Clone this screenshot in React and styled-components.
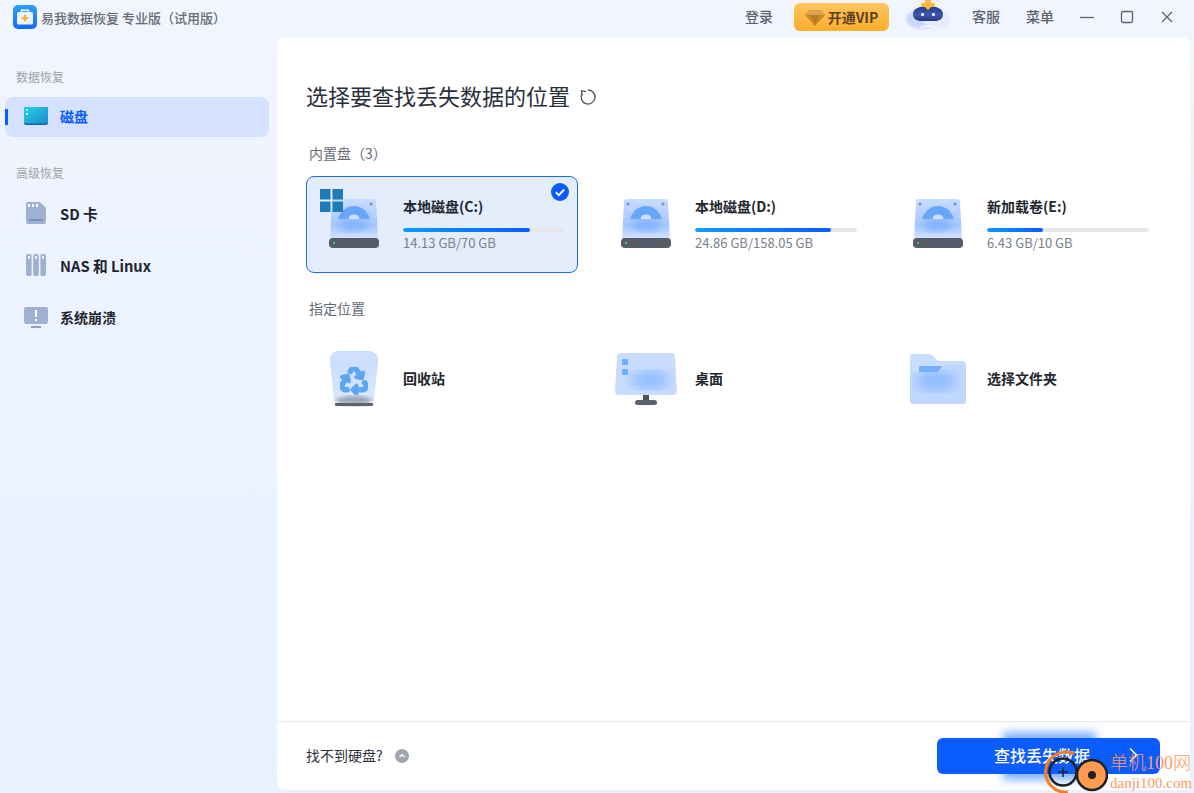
import React from "react";
import styled, { createGlobalStyle } from "styled-components";
import { FaRecycle } from "react-icons/fa";

const Global = createGlobalStyle`
  html, body { margin: 0; padding: 0; height: 100%; }
  body { font-family: "Noto Sans CJK SC", "Noto Sans", sans-serif; overflow: hidden; }
  #root { height: 100%; }
`;

const Page = styled.div`
  position: relative;
  width: 1194px;
  height: 793px;
  display: flex;
  flex-direction: column;
  overflow: hidden;
  background: linear-gradient(180deg, #f0f5ff 0%, #e9f1ff 100%);
`;

const TitleBar = styled.header`
  height: 37px;
  flex: none;
  box-sizing: border-box;
  padding: 0 0 3px 13px;
  display: flex;
  align-items: center;
`;
const AppTitle = styled.span`
  margin-left: 4px;
  font-size: 13px;
  font-weight: 500;
  color: #666b76;
  white-space: nowrap;
`;
const TitleActions = styled.div`
  margin-left: auto;
  display: flex;
  align-items: center;
`;
const TitleLink = styled.span`
  font-size: 14px;
  font-weight: 500;
  line-height: 18px;
  padding-bottom: 2px;
  color: #5c6270;
  margin-left: ${(p) => p.$ml}px;
`;
const VipButton = styled.div`
  margin-left: 21px;
  width: 95px;
  height: 28px;
  border-radius: 6px;
  background: linear-gradient(180deg, #ffc55c 0%, #ffad2b 100%);
  display: flex;
  align-items: center;
  justify-content: center;
  gap: 3px;
  font-size: 14px;
  font-weight: 700;
  color: #5a4320;
`;
const RobotSlot = styled.span`
  display: flex;
  margin: -4px 0 0 16px;
`;
const WinButton = styled.button`
  border: 0;
  background: none;
  padding: 0;
  width: 16px;
  height: 16px;
  display: flex;
  color: #5c6270;
  margin-left: ${(p) => p.$ml}px;
  margin-right: ${(p) => p.$mr || 0}px;
`;

const Body = styled.div`
  flex: 1;
  display: flex;
  min-height: 0;
`;
const Sidebar = styled.aside`
  width: 277px;
  flex: none;
  padding: 30px 8px 0 5px;
  box-sizing: border-box;
`;
const SideLabel = styled.div`
  height: 20px;
  line-height: 20px;
  margin: ${(p) => p.$m};
  padding-left: 11px;
  font-size: 12px;
  color: #a0a3ab;
`;
const SideItem = styled.div`
  position: relative;
  height: ${(p) => (p.$active ? 40 : 52)}px;
  box-sizing: border-box;
  padding: 0 0 2px 19px;
  border-radius: 8px;
  display: flex;
  align-items: center;
  background: ${(p) => (p.$active ? "#d4e2ff" : "transparent")};
  color: ${(p) => (p.$active ? "#0a5cff" : "#1f2430")};
  font-size: ${(p) => (p.$latin ? 14.7 : 14)}px;
  font-weight: 700;
`;
const ActiveMark = styled.i`
  position: absolute;
  left: 0;
  top: 12px;
  width: 3px;
  height: 16px;
  background: #0a5cff;
`;
const SideIcon = styled.span`
  width: 24px;
  height: 24px;
  display: flex;
  align-items: center;
  justify-content: center;
  margin-right: 12px;
`;

const Panel = styled.main`
  width: 913px;
  height: 753px;
  flex: none;
  background: #fff;
  border-radius: 8px;
  display: flex;
  flex-direction: column;
  box-sizing: border-box;
  padding-top: 44px;
`;
const Content = styled.div`
  padding-left: 29px;
`;
const HeadRow = styled.div`
  height: 30px;
  display: flex;
  align-items: flex-start;
  gap: 9px;
`;
const Heading = styled.h1`
  margin: 0;
  font-size: 22px;
  font-weight: 400;
  color: #2a2f3c;
  line-height: 28px;
`;
const RefreshIcon = styled.svg`
  align-self: center;
  margin-top: 2px;
`;
const SectionLabel = styled.div`
  height: 20px;
  line-height: 18px;
  margin: ${(p) => p.$mt}px 0 12px 3px;
  font-size: 14px;
  color: #666b76;
`;
const Grid = styled.div`
  display: grid;
  grid-template-columns: repeat(3, 272px);
  column-gap: 20px;
`;
const Card = styled.div`
  position: relative;
  height: 97px;
  box-sizing: border-box;
  display: grid;
  grid-template-columns: 97px 162px;
  align-items: center;
  border-radius: 8px;
  border: 1px solid ${(p) => (p.$selected ? "#1f6cf0" : "transparent")};
  background: ${(p) => (p.$selected ? "#e3edfb" : "transparent")};
`;
const IconCell = styled.div`
  display: flex;
  justify-content: center;
  align-items: center;
  margin-left: -3px;
  padding-bottom: 2px;
`;
const DriveInfo = styled.div`
  padding-bottom: 1px;
`;
const Name = styled.div`
  font-size: 14px;
  font-weight: 700;
  color: #22262f;
  line-height: 16px;
  margin-left: -1px;
`;
const PlaceName = styled(Name)`
  padding-bottom: 3px;
`;
const Track = styled.div`
  height: 4px;
  margin: 14px 1px 3px -1px;
  border-radius: 2px;
  background: #e6e7ea;
  overflow: hidden;
`;
const Fill = styled.div`
  height: 100%;
  width: ${(p) => p.$pct}%;
  border-radius: 2px;
  background: linear-gradient(90deg, #0f9bff 0%, #0a5cff 100%);
`;
const Size = styled.div`
  font-size: 13px;
  line-height: 16px;
  color: #7a7f8a;
  margin-left: -1px;
  white-space: nowrap;
`;
const Check = styled.svg`
  position: absolute;
  right: 8px;
  top: 6px;
`;
const WinBadge = styled.svg`
  position: absolute;
  left: 13px;
  top: 12px;
`;
const Footer = styled.footer`
  margin-top: auto;
  height: 69px;
  flex: none;
  box-sizing: border-box;
  border-top: 1px solid #e6e8ec;
  display: flex;
  align-items: center;
  padding: 0 30px 0 29px;
`;
const HelpText = styled.span`
  font-size: 14px;
  color: #2b2f38;
  padding-bottom: 2px;
`;
const HelpIcon = styled.svg`
  margin-left: 12px;
`;
const ScanWrap = styled.div`
  position: relative;
  z-index: 0;
  margin-left: auto;
`;
const ScanButton = styled.button`
  position: relative;
  width: 223px;
  height: 36px;
  border: 0;
  border-radius: 6px;
  background: #0a5cff;
  color: #fff;
  font-family: inherit;
  font-size: 16px;
  font-weight: 500;
  display: flex;
  align-items: center;
  padding: 0 0 3px 57px;
  gap: 38px;
  &::before {
    content: "";
    position: absolute;
    left: 66px;
    right: 64px;
    top: -6px;
    bottom: -6px;
    background: #7fb2ff;
    filter: blur(4px);
    z-index: -1;
  }
`;
const Watermark = styled.div`
  position: absolute;
  left: 1044px;
  top: 750px;
  width: 150px;
  height: 43px;
  display: flex;
`;
const WmText = styled.div`
  margin-left: 66px;
  margin-top: 1px;
  color: #ff9a60;
  font-family: "Liberation Serif", "Noto Sans CJK SC", serif;
  white-space: nowrap;
`;
const WmCn = styled.div`
  font-size: 18px;
  line-height: 24px;
  font-weight: 300;
`;
const WmEn = styled.div`
  font-size: 15px;
  line-height: 17px;
`;
const WmLogo = styled.svg`
  position: absolute;
  left: 0;
  top: 0;
`;

const Logo = () => (
  <svg width="24" height="24" viewBox="0 0 24 24">
    <defs>
      <linearGradient id="logoGrad" x1="0" y1="0" x2="0" y2="1">
        <stop offset="0" stopColor="#2ea2fb" />
        <stop offset="1" stopColor="#1369f5" />
      </linearGradient>
    </defs>
    <rect width="24" height="24" rx="5" fill="url(#logoGrad)" />
    <path d="M8.5 7V5.2h7V7" fill="none" stroke="#fff" strokeWidth="1.4" />
    <rect x="4" y="7" width="16" height="12.5" rx="1.5" fill="#eaf4ff" />
    <path d="M11 9.8h2v2.4h2.4v2H13v2.4h-2v-2.4H8.6v-2H11z" fill="#ffb020" />
  </svg>
);

const Diamond = () => (
  <svg width="20" height="17" viewBox="0 0 20 17">
    <path d="M4 1h12l4 5-10 11L0 6z" fill="#c9862a" />
    <path d="M4 1h12l4 5H0z" fill="#dca44a" />
    <path d="M6 6h8l-4 10z" fill="#b87a22" />
  </svg>
);

const Robot = () => (
  <svg width="46" height="30" viewBox="0 0 46 30">
    <defs>
      <filter id="robotBlur"><feGaussianBlur stdDeviation="1.2" /></filter>
      <linearGradient id="robotFace" x1="0" y1="0" x2="0" y2="1">
        <stop offset="0" stopColor="#243a86" />
        <stop offset="0.6" stopColor="#3e58b0" />
        <stop offset="1" stopColor="#22367c" />
      </linearGradient>
    </defs>
    <ellipse cx="17" cy="19" rx="16" ry="10" fill="#c9d8ff" filter="url(#robotBlur)" />
    <ellipse cx="32" cy="20" rx="13" ry="9" fill="#e6eaff" filter="url(#robotBlur)" />
    <path d="M8 14c0-5 6-8 15-8s15 3 15 8c0 5-4 7-8 7H16c-4 0-8-2-8-7z" fill="url(#robotFace)" />
    <path d="M20 0h6v3h4v4h-4l-3 3-3-3h-4V3h4z" fill="#f5b93c" />
    <rect x="16" y="13" width="3" height="3" rx="1" fill="#e6eeff" />
    <rect x="27" y="13" width="3" height="3" rx="1" fill="#e6eeff" />
    <path d="M15 28q8-4 16 0" fill="none" stroke="#fff" strokeWidth="1.5" opacity="0.8" />
  </svg>
);

const DiskSide = () => (
  <svg width="24" height="18" viewBox="0 0 24 18">
    <defs>
      <linearGradient id="sideDisk" x1="0" y1="0" x2="1" y2="1">
        <stop offset="0" stopColor="#2ad0e0" />
        <stop offset="1" stopColor="#1a8cd0" />
      </linearGradient>
    </defs>
    <rect width="24" height="18" rx="2" fill="#10689c" />
    <rect width="24" height="16.5" rx="2" fill="url(#sideDisk)" />
    <rect x="2" y="2" width="2" height="2" fill="#a5eef5" />
    <rect x="2" y="6" width="2" height="2" fill="#a5eef5" />
  </svg>
);

const SdIcon = () => (
  <svg width="20" height="22" viewBox="0 0 20 22">
    <path d="M2 0h12l6 6v14a2 2 0 0 1-2 2H2a2 2 0 0 1-2-2V2a2 2 0 0 1 2-2z" fill="#9eb1d2" />
    <path d="M2 2h2v3H2zM6 2h2v3H6zM10 2h2v3h-2z" fill="#fff" />
    <rect x="3" y="17" width="14" height="2" fill="#7c90b5" />
  </svg>
);
const NasIcon = () => (
  <svg width="20" height="22" viewBox="0 0 20 22" fill="#9eb1d2">
    <rect x="0" y="0" width="5.6" height="22" rx="2" />
    <rect x="7.2" y="0" width="5.6" height="22" rx="2" />
    <rect x="14.4" y="0" width="5.6" height="22" rx="2" />
    <g fill="#fff">
      <rect x="2" y="2" width="1.6" height="3" />
      <rect x="9.2" y="2" width="1.6" height="3" />
      <rect x="16.4" y="2" width="1.6" height="3" />
    </g>
  </svg>
);
const CrashIcon = () => (
  <svg width="24" height="21" viewBox="0 0 24 21">
    <rect width="24" height="17" rx="2" fill="#9eb1d2" />
    <rect x="7" y="19" width="10" height="2" fill="#8ba0c5" />
    <rect x="11" y="3" width="2" height="7" fill="#fff" />
    <rect x="11" y="12" width="2" height="2" fill="#fff" />
  </svg>
);

const Disk = ({ id }) => (
  <svg width="50" height="50" viewBox="0 0 50 50">
    <defs>
      <linearGradient id={`diskBody${id}`} x1="0" y1="0" x2="0" y2="1">
        <stop offset="0" stopColor="#c9dcff" />
        <stop offset="0.65" stopColor="#a3c6ff" />
        <stop offset="1" stopColor="#d4e3ff" />
      </linearGradient>
      <filter id={`diskBlur${id}`}><feGaussianBlur stdDeviation="3.500" /></filter>
      <clipPath id={`diskClip${id}`}><rect x="0" y="0" width="50" height="20" /></clipPath>
    </defs>
    <path d="M6 0h38a3 3 0 0 1 3 3l2 37H1L3 3a3 3 0 0 1 3-3z" fill={`url(#diskBody${id})`} />
    <ellipse cx="25" cy="26" rx="15" ry="6" fill="#82b2ff" filter={`url(#diskBlur${id})`} />
    <g clipPath={`url(#diskClip${id})`}>
      <circle cx="25" cy="23" r="16" fill="#67a6f8" />
      <ellipse cx="25" cy="20" rx="5.500" ry="4.500" fill="#cfe0ff" />
    </g>
    <circle cx="7" cy="5" r="1.600" fill="#7f95bb" />
    <circle cx="42" cy="5" r="1.600" fill="#7f95bb" />
    <rect x="0" y="39" width="50" height="10" rx="4" fill="#555b67" />
    <rect x="4" y="43" width="2" height="2" fill="#2ed47a" />
  </svg>
);

const Recycle = () => (
  <svg width="48" height="56" viewBox="0 0 48 56">
    <defs>
      <linearGradient id="binBody" x1="0" y1="0" x2="0" y2="1">
        <stop offset="0" stopColor="#c6dbff" />
        <stop offset="1" stopColor="#dbe8ff" />
      </linearGradient>
      <filter id="binBlur"><feGaussianBlur stdDeviation="2" /></filter>
    </defs>
    <path d="M9 0h30c5 0 9 4 9 8v3l-4 39H4L0 11V8c0-4 4-8 9-8z" fill="url(#binBody)" />
    <path d="M1 9c0-4 4-8 8-8h30c4 0 8 4 8 8v2H1z" fill="#cfe0ff" />
    <FaRecycle x="10" y="16" size="28" color="#5fa6f2" stroke="#5fa6f2" strokeWidth="36" />
    <ellipse cx="24" cy="50" rx="18" ry="5" fill="#6a7486" opacity="0.6" filter="url(#binBlur)" />
    <rect x="5" y="52" width="38" height="3" rx="1" fill="#5e636f" />
  </svg>
);

const Monitor = () => (
  <svg width="62" height="52" viewBox="0 0 62 52">
    <defs>
      <filter id="monitorBlur"><feGaussianBlur stdDeviation="6" /></filter>
      <clipPath id="monitorClip"><path d="M6 0h50a4 4 0 0 1 4 4l2 34a4 4 0 0 1-4 4H4a4 4 0 0 1-4-4L2 4a4 4 0 0 1 4-4z" /></clipPath>
    </defs>
    <g clipPath="url(#monitorClip)">
      <rect width="62" height="42" fill="#c9dbff" />
      <ellipse cx="35" cy="27" rx="20" ry="9" fill="#8fbdff" filter="url(#monitorBlur)" />
    </g>
    <rect x="7" y="6" width="6" height="6" rx="1" fill="#64b4ff" />
    <rect x="7" y="16" width="6" height="6" rx="1" fill="#64b4ff" />
    <rect x="28" y="42" width="6" height="7" fill="#4c5361" />
    <rect x="20" y="47" width="22" height="5" rx="2.500" fill="#5a606c" />
  </svg>
);

const Folder = () => (
  <svg width="56" height="50" viewBox="0 0 56 50">
    <defs>
      <filter id="folderBlur"><feGaussianBlur stdDeviation="6" /></filter>
      <clipPath id="folderClip"><path d="M0 18h28l5-7h20a3 3 0 0 1 3 3v33a3 3 0 0 1-3 3H3a3 3 0 0 1-3-3z" /></clipPath>
    </defs>
    <path d="M3 0h16c2 0 3 1 4 2l5 5h25a3 3 0 0 1 3 3v12H0V3a3 3 0 0 1 3-3z" fill="#c9deff" />
    <rect x="9" y="12" width="26" height="10" rx="1.500" fill="#74aefc" />
    <g clipPath="url(#folderClip)">
      <rect width="56" height="50" fill="#c0d7ff" />
      <ellipse cx="26" cy="27" rx="20" ry="10" fill="#8fbcff" filter="url(#folderBlur)" />
    </g>
  </svg>
);

const drives = [
  { id: "c", name: "本地磁盘(C:)", size: "14.13 GB/70 GB", pct: 78.4, selected: true },
  { id: "d", name: "本地磁盘(D:)", size: "24.86 GB/158.05 GB", pct: 84 },
  { id: "e", name: "新加载卷(E:)", size: "6.43 GB/10 GB", pct: 34.6 },
];

const places = [
  { name: "回收站", Icon: Recycle },
  { name: "桌面", Icon: Monitor },
  { name: "选择文件夹", Icon: Folder },
];

export default function App() {
  return (
    <Page>
      <Global />
      <TitleBar>
        <Logo />
        <AppTitle>易我数据恢复 专业版（试用版）</AppTitle>
        <TitleActions>
          <TitleLink>登录</TitleLink>
          <VipButton><Diamond />开通VIP</VipButton>
          <RobotSlot><Robot /></RobotSlot>
          <TitleLink $ml={21}>客服</TitleLink>
          <TitleLink $ml={26}>菜单</TitleLink>
          <WinButton $ml={25}>
            <svg width="16" height="16" viewBox="0 0 16 16"><path d="M1 8.500h14" stroke="currentColor" strokeWidth="1.300" /></svg>
          </WinButton>
          <WinButton $ml={24}>
            <svg width="16" height="16" viewBox="0 0 16 16"><rect x="2.500" y="2.500" width="11" height="11" rx="1.500" fill="none" stroke="currentColor" strokeWidth="1.300" /></svg>
          </WinButton>
          <WinButton $ml={24} $mr={19}>
            <svg width="16" height="16" viewBox="0 0 16 16"><path d="M3 3l10 10M13 3L3 13" stroke="currentColor" strokeWidth="1.300" /></svg>
          </WinButton>
        </TitleActions>
      </TitleBar>
      <Body>
        <Sidebar>
          <SideLabel $m="0 0 10px">数据恢复</SideLabel>
          <SideItem $active>
            <ActiveMark />
            <SideIcon><DiskSide /></SideIcon>磁盘
          </SideItem>
          <SideLabel $m="26px 0 5px">高级恢复</SideLabel>
          <SideItem $latin><SideIcon><SdIcon /></SideIcon>SD 卡</SideItem>
          <SideItem $latin><SideIcon><NasIcon /></SideIcon>NAS 和 Linux</SideItem>
          <SideItem><SideIcon><CrashIcon /></SideIcon>系统崩溃</SideItem>
        </Sidebar>
        <Panel>
          <Content>
            <HeadRow>
              <Heading>选择要查找丢失数据的位置</Heading>
              <RefreshIcon width="18" height="18" viewBox="0 0 18 18" fill="none" stroke="#4b505c" strokeWidth="1.300">
                <path d="M9 2A7 7 0 1 1 3 5.500" />
                <path d="M3.200 7.500L2.500 2.700 7 3.600" />
              </RefreshIcon>
            </HeadRow>
            <SectionLabel $mt={33}>内置盘（3）</SectionLabel>
            <Grid>
              {drives.map((d) => (
                <Card key={d.id} $selected={d.selected}>
                  {d.selected && (
                    <WinBadge width="24" height="24" viewBox="0 0 24 24" fill="#1f7ab8">
                      <rect width="10.500" height="10.500" />
                      <rect x="12.500" width="10.500" height="10.500" />
                      <rect y="12.500" width="10.500" height="10.500" />
                      <rect x="12.500" y="12.500" width="10.500" height="10.500" />
                    </WinBadge>
                  )}
                  {d.selected && (
                    <Check width="18" height="18" viewBox="0 0 18 18">
                      <circle cx="9" cy="9" r="9" fill="#0a5cff" />
                      <path d="M4.800 9.300l3 2.800 5.400-5.600" fill="none" stroke="#fff" strokeWidth="1.900" />
                    </Check>
                  )}
                  <IconCell><Disk id={d.id} /></IconCell>
                  <DriveInfo>
                    <Name>{d.name}</Name>
                    <Track><Fill $pct={d.pct} /></Track>
                    <Size>{d.size}</Size>
                  </DriveInfo>
                </Card>
              ))}
            </Grid>
            <SectionLabel $mt={26}>指定位置</SectionLabel>
            <Grid>
              {places.map(({ name, Icon }) => (
                <Card key={name}>
                  <IconCell><Icon /></IconCell>
                  <PlaceName>{name}</PlaceName>
                </Card>
              ))}
            </Grid>
          </Content>
          <Footer>
            <HelpText>找不到硬盘?</HelpText>
            <HelpIcon width="14" height="14" viewBox="0 0 14 14">
              <circle cx="7" cy="7" r="7" fill="#a3a7b2" />
              <path d="M4.500 8l2.500-2.300L9.500 8" fill="none" stroke="#fff" strokeWidth="1.400" />
            </HelpIcon>
            <ScanWrap>
              <ScanButton>
                查找丢失数据
                <svg width="10" height="16" viewBox="0 0 10 16"><path d="M2 1.500L8.500 8 2 14.500" fill="none" stroke="#fff" strokeWidth="1.600" /></svg>
              </ScanButton>
            </ScanWrap>
          </Footer>
        </Panel>
      </Body>
      <Watermark>
        <WmLogo width="64" height="43" viewBox="0 0 64 43" fill="none">
          <path d="M30 4A20 20 0 1 0 24 42" stroke="#f57c1f" strokeWidth="3" />
          <circle cx="19" cy="22" r="13.500" stroke="#1f2024" strokeWidth="2.500" />
          <path d="M14 22h10M19 17v10" stroke="#1f2024" strokeWidth="1.500" />
          <circle cx="48" cy="25" r="15" fill="#ff9a4f" stroke="#1f2024" strokeWidth="2.500" />
          <circle cx="48" cy="25" r="4" fill="#1f2024" />
        </WmLogo>
        <WmText>
          <WmCn>单机100网</WmCn>
          <WmEn>danji100.com</WmEn>
        </WmText>
      </Watermark>
    </Page>
  );
}
